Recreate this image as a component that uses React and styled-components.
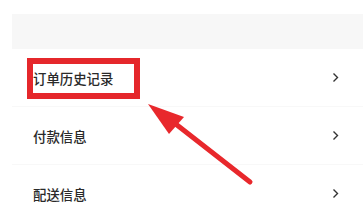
import React from 'react';
import styled, { createGlobalStyle } from 'styled-components';

const Global = createGlobalStyle`
  body {
    margin: 0;
    background: #fff;
    font-family: "Noto Sans CJK SC", "Noto Sans", sans-serif;
  }
`;

const Page = styled.div`
  position: relative;
  width: 363px;
  height: 218px;
  overflow: hidden;
  background: #fff;
  padding-top: 14px;
  box-sizing: border-box;
`;

const Panel = styled.div`
  margin-left: 12px;
`;

const GreyBand = styled.div`
  height: 35px;
  background: #f7f7f7;
`;

const Row = styled.div`
  display: flex;
  align-items: center;
  justify-content: space-between;
  height: 58px;
  padding: 0 24px 0 21px;
  border-bottom: 1px solid #f8f8f8;
  box-sizing: border-box;
`;

const Label = styled.span`
  font-size: 13.4px;
  font-weight: 500;
  color: #2a2a2a;
`;

const Chevron = () => (
  <svg width="7" height="11" viewBox="0 0 7 11">
    <polyline points="1.5,1.5 5.5,5.5 1.5,9.5" fill="none" stroke="#333" strokeWidth="1.4" />
  </svg>
);

const Highlight = styled.div`
  position: absolute;
  left: 27px;
  top: 58px;
  width: 113px;
  height: 41px;
  border: 6px solid #e5272b;
  box-sizing: border-box;
`;

const Arrow = styled.svg`
  position: absolute;
  left: 0;
  top: 0;
`;

const items = ['订单历史记录', '付款信息', '配送信息'];

const App = () => {
  return (
    <>
      <Global />
      <Page>
        <Panel>
          <GreyBand />
          {items.map((t) => (
            <Row key={t}>
              <Label>{t}</Label>
              <Chevron />
            </Row>
          ))}
        </Panel>
        <Highlight />
        <Arrow width="363" height="218" viewBox="0 0 363 218">
          <line x1="250" y1="182" x2="168" y2="118" stroke="#e8282c" strokeWidth="5" strokeLinecap="round" />
          <polygon points="148,104 184,117 169,134" fill="#e8282c" />
        </Arrow>
      </Page>
    </>
  );
};

export default App;
